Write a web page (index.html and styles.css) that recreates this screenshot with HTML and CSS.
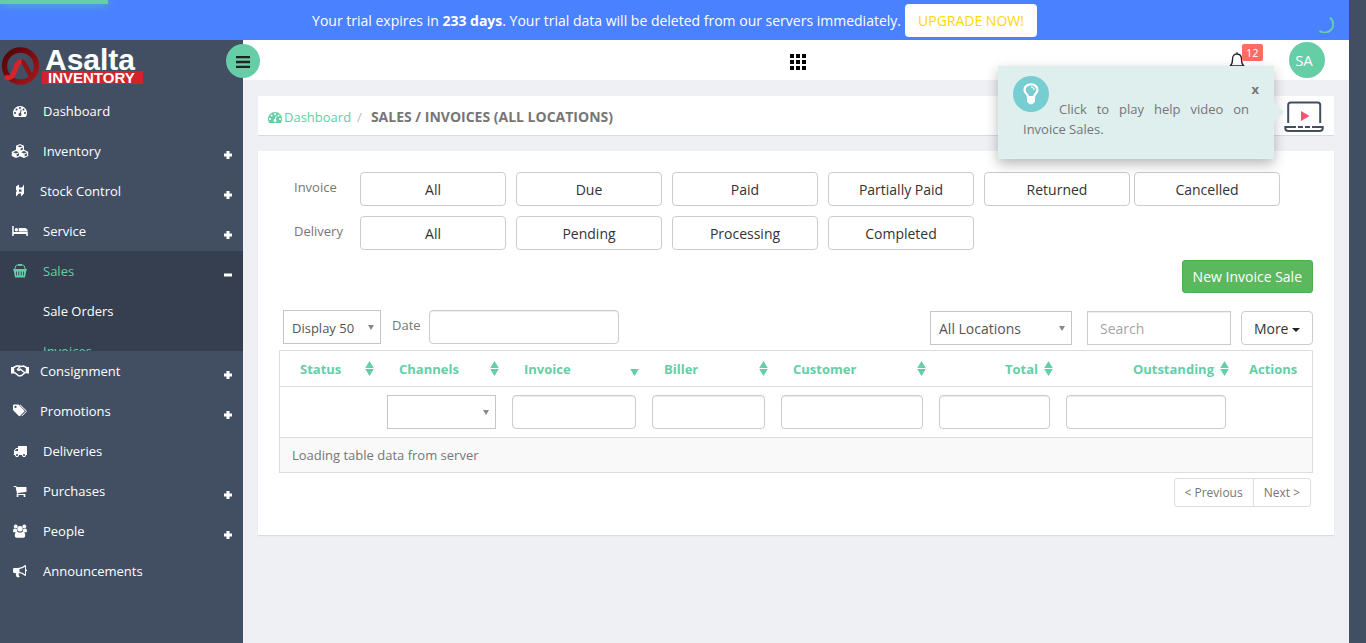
FILE: index.html
```html
<!DOCTYPE html>
<html lang="en">
<head>
<meta charset="utf-8">
<meta name="viewport" content="width=device-width, initial-scale=1">
<title>Sales / Invoices - Asalta Inventory</title>
<link rel="stylesheet" href="styles.css">
</head>
<body>
<svg class="sprite" aria-hidden="true">
  <symbol id="gauge" viewBox="0 0 1792 1792"><path d="M384 1152q0-53-37.500-90.500t-90.500-37.500-90.500 37.500-37.500 90.500 37.500 90.500 90.500 37.500 90.500-37.500 37.500-90.500zm192-448q0-53-37.500-90.500t-90.500-37.500-90.500 37.500-37.500 90.500 37.500 90.500 90.500 37.500 90.500-37.500 37.500-90.500zm428 481l101-382q6-26-7.500-48.500t-38.500-29.500-48 6.500-30 39.500l-101 382q-60 5-107 43.500t-63 98.500q-20 77 20 146t117 89 146-20 89-117q16-60-6-117t-72-91zm660-33q0-53-37.500-90.500t-90.500-37.500-90.500 37.500-37.500 90.500 37.500 90.500 90.500 37.500 90.500-37.500 37.500-90.500zm-640-640q0-53-37.500-90.500t-90.500-37.500-90.500 37.500-37.500 90.500 37.500 90.500 90.500 37.500 90.500-37.500 37.500-90.500zm448 192q0-53-37.500-90.500t-90.500-37.500-90.500 37.500-37.500 90.500 37.500 90.500 90.500 37.500 90.500-37.500 37.500-90.500zm320 448q0 261-141 483-19 29-54 29h-1402q-35 0-54-29-141-221-141-483 0-182 71-348t191-286 286-191 348-71 348 71 286 191 191 286 71 348z"/></symbol>
  <symbol id="sort" viewBox="0 0 9 15"><path d="M4.500 0L8.800 7H.2zM.2 8h8.600L4.500 15z"/></symbol>
  <symbol id="sort-down" viewBox="0 0 9 15"><path d="M.2 8h8.600L4.500 15z"/></symbol>
</svg>

<div class="app">
  <div class="trial">
    <span class="notice">Your trial expires in <b>233 days</b>. Your trial data will be deleted from our servers immediately.</span>
    <a class="upgrade" href="#">UPGRADE NOW!</a>
    <div class="progress"></div>
    <svg class="spinner" width="18" height="18" viewBox="0 0 18 18"><path d="M14 2.500A8 8 0 0 1 3.500 15.800" fill="none" stroke="#65cea7" stroke-width="2"/></svg>
  </div>

  <div class="shell">
    <aside class="sidebar">
      <a class="logo" href="#" aria-label="Asalta Inventory">
        <svg class="brand" width="146" height="42" viewBox="0 0 146 42">
          <defs>
            <linearGradient id="ring" x1="0" y1="0" x2="1" y2="1"><stop offset="0" stop-color="#4d0507"/><stop offset=".5" stop-color="#7a0c0f"/><stop offset="1" stop-color="#a5191d"/></linearGradient>
          </defs>
          <circle cx="20.500" cy="21" r="16" fill="none" stroke="url(#ring)" stroke-width="5.400"/>
          <path d="M20.500 16.500Q23 16 25 20l7 13" fill="none" stroke="#8d1518" stroke-width="4.500"/>
          <path d="M5 32c8 3 9-4 11-10 1.500-4 3-5.500 5.500-5.500" fill="none" stroke="#d8232a" stroke-width="5"/>
          <rect x="42" y="26" width="101" height="13" fill="#d2232a"/>
          <text class="logo-name" x="45" y="25">Asalta</text>
          <text class="logo-sub" x="48" y="38">INVENTORY</text>
        </svg>
      </a>
      <button class="toggle" aria-label="Toggle menu"><svg width="14" height="12" viewBox="0 0 14 12"><path d="M0 1h14M0 6h14M0 11h14" stroke="#222" stroke-width="2.400"/></svg></button>

      <nav>
        <a class="item" href="#"><svg class="ico"><use href="#gauge"/></svg>Dashboard</a>
        <a class="item more" href="#"><svg class="ico wide" viewBox="0 0 17 14"><path fill-rule="evenodd" d="M8.500 0l4 1.700v4.100l4.200 1.900v4.300l-4.200 2-4-1.800-4 1.800-4.200-2V7.700l4.200-1.900V1.700zM6 2.300l2.500 1 2.500-1L8.500 1.300zM9.200 6.600l2.200-1V3.500l-2.200.9zM1.700 8.300l2.800 1.200 2.800-1.200-2.800-1.200zM5.200 12.600l2.300-1.100V9.300l-2.300 1zM9.700 8.300l2.800 1.200 2.800-1.200-2.800-1.200zM13.200 12.600l2.300-1.100V9.300l-2.300 1z"/></svg>Inventory</a>
        <a class="item near more" href="#"><svg class="ico" viewBox="0 0 14 14"><path fill-rule="evenodd" d="M3 2.500l3-2v3h3l2-3v9l-3 3v-3H6l-3 3V8l1-1-1-1zM6 5.500v2.300h2.500V5.500z"/></svg>Stock Control</a>
        <a class="item more" href="#"><svg class="ico wide" viewBox="0 0 17 14"><path d="M.7 2H2.200V8h14.100v4h-1.500v-2H2.200v2H.7zM16.300 7.500H7.200V4h5.600q3.500 0 3.500 3.500zM6.600 5.700a1.700 1.700 0 1 1-3.400 0 1.700 1.700 0 0 1 3.400 0z"/></svg>Service</a>
        <div class="group">
          <a class="item active less" href="#"><svg class="ico" viewBox="0 0 14 14"><path d="M1.800 5l1-3Q3.200 1 4.300 1h5.400q1.100 0 1.500 1l1 3" fill="none" stroke="currentColor"/><path d="M5 0h4v1.800H5z"/><path fill-rule="evenodd" d="M.3 5h13.400v1.800h-.5L12 13.500H2L.8 6.800H.3zM3 7.500v4h.8v-4zm2.400 0v4h.8v-4zm2.400 0v4h.8v-4zm2.400 0v4h.8v-4z"/></svg>Sales</a>
          <a class="item sub" href="#">Sale Orders</a>
          <a class="item sub active" href="#">Invoices</a>
        </div>
        <a class="item near more" href="#"><svg class="ico wide" viewBox="0 0 18 14"><path d="M0 3h2v6.500H0zM16 3h2v6.500h-2z"/><path d="M2.500 3.500l3-1.500h3L10 2.500 12.500 2l3 1.500v5h-1.300L10.500 11.500 8 12 3.800 8.700H2.500zM8.700 3L6.500 5.500q1.500 1.500 3-.3l4 3.300" fill="none" stroke="currentColor" stroke-width="1.500"/></svg>Consignment</a>
        <a class="item near more" href="#"><svg class="ico" viewBox="0 0 14 14"><path fill-rule="evenodd" d="M0 1.500Q0 .5 1 .5h4.500l5.700 5.700q.8.800 0 1.600l-4 4q-.8.700-1.600 0L0 6zM2.500 1.800a1.100 1.100 0 1 0 0 2.200 1.100 1.100 0 0 0 0-2.200z"/><path d="M7 .8l6 5.800q.5.600 0 1.200L8.800 12" fill="none" stroke="currentColor"/></svg>Promotions</a>
        <a class="item" href="#"><svg class="ico" viewBox="0 0 1792 1792"><path d="M640 1408q0-52-38-90t-90-38-90 38-38 90 38 90 90 38 90-38 38-90zm-384-512h384v-256h-158q-13 0-22 9l-195 195q-9 9-9 22v30zm1280 512q0-52-38-90t-90-38-90 38-38 90 38 90 90 38 90-38 38-90zm256-1088v1024q0 15-4 26.500t-13.500 18.500-16.500 11.500-23.500 6-22.500 2-25.500 0-22.500-.5q0 106-75 181t-181 75-181-75-75-181h-384q0 106-75 181t-181 75-181-75-75-181h-64q-3 0-22.500.5t-25.500 0-22.500-2-23.500-6-16.500-11.500-13.500-18.500-4-26.500q0-26 19-45t45-19v-320q0-8-.5-35t0-38 2.500-34.500 6.500-37 14-30.500 22.500-30l198-198q19-19 50.500-32t58.500-13h160v-192q0-26 19-45t45-19h1024q26 0 45 19t19 45z"/></svg>Deliveries</a>
        <a class="item more" href="#"><svg class="ico" viewBox="0 0 1792 1792"><path d="M704 1536q0 52-38 90t-90 38-90-38-38-90 38-90 90-38 90 38 38 90zm896 0q0 52-38 90t-90 38-90-38-38-90 38-90 90-38 90 38 38 90zm128-1088v512q0 24-16.500 42.500t-40.500 21.500l-1044 122q13 60 13 70 0 16-24 64h920q26 0 45 19t19 45-19 45-45 19h-1024q-26 0-45-19t-19-45q0-11 8-31.500t16-36 21.500-40 15.500-29.500l-177-823h-204q-26 0-45-19t-19-45 19-45 45-19h256q16 0 28.500 6.500t19.500 15.500 13 24.500 8 26 5.500 29.500 4.500 26h1201q26 0 45 19t19 45z"/></svg>Purchases</a>
        <a class="item more" href="#"><svg class="ico" viewBox="0 0 14 14"><circle cx="2.700" cy="2.500" r="1.900"/><circle cx="11.300" cy="2.500" r="1.900"/><circle cx="7" cy="4.700" r="2.700"/><path d="M0 7.500Q0 4.500 1.200 4.500q1.300.8 2.500.3 0 1.700.9 2.700-1.200 0-1.900.8H1Q0 8.300 0 7.500zM14 7.500q0-3-1.200-3-1.300.8-2.500.3 0 1.700-.9 2.700 1.200 0 1.900.8H13q1 0 1-.8zM4.200 7.700q2.800 1.700 5.600 0 2.400 0 2.400 4 0 2-1.900 2H3.700q-1.900 0-1.900-2 0-4 2.400-4z"/></svg>People</a>
        <a class="item" href="#"><svg class="ico" viewBox="0 0 14 14"><path fill-rule="evenodd" d="M13 5.200q1 .3 1 1.100t-1 1.100v3.600q0 .9-.9.900Q9.500 9.500 6 9q-1 .8-.2 1.600-.5.700.9 1.900-.8 1.300-3 .6Q2.500 10.800 2.800 9H1.300Q0 9 0 7.700V5.300Q0 4 1.300 4H5q3.800 0 7.100-3 .9 0 .9.900zm-1-2.500Q9.500 4.600 6.500 5v3q3 .4 5.500 2.300z"/></svg>Announcements</a>
      </nav>
    </aside>

    <main class="main">
      <header class="topbar">
        <span></span>
        <button class="plain" aria-label="Apps"><svg width="16" height="16" viewBox="0 0 16 16"><path d="M0 0h4v4H0zm6 0h4v4H6zm6 0h4v4h-4zM0 6h4v4H0zm6 0h4v4H6zm6 0h4v4h-4zM0 12h4v4H0zm6 0h4v4H6zm6 0h4v4h-4z"/></svg></button>
        <div class="account">
          <button class="plain bell" aria-label="Notifications"><svg width="16" height="18" viewBox="0 0 16 18"><path d="M8 .3v1.500M1.200 14Q3.500 12 3.500 7.500 3.500 2 8 2t4.500 5.500Q12.500 12 14.800 14zM6.300 14.500q.2 2 1.700 2t1.700-2" fill="none" stroke="#222" stroke-width="1.300"/></svg><span class="badge">12</span></button>
          <button class="avatar">SA</button>
        </div>
      </header>

      <div class="content">
        <div class="crumbs">
          <a class="home" href="#"><svg width="14" height="14"><use href="#gauge"/></svg>Dashboard</a>
          <span class="slash">/</span>
          <h1>SALES / INVOICES (ALL LOCATIONS)</h1>
          <a class="video" href="#" aria-label="Play help video"><svg width="40" height="32" viewBox="0 0 40 32"><path d="M4.200 22V4q0-2.500 2.500-2.500h27Q36.200 1.500 36.200 4v18" fill="none" stroke="#424f63" stroke-width="2"/><path d="M12 26H1.300v1.200q0 2.800 3 2.800h31.400q3 0 3-2.800V26H28M14 26h5M21 26h5" fill="none" stroke="#424f63" stroke-width="2"/><path d="M17 10l8.500 5-8.500 5z" fill="#fc5171"/></svg></a>
          <div class="tip">
            <span class="bulb"><svg width="16" height="22" viewBox="0 0 16 22"><path d="M5 14Q4.700 12 3 10.200 1.500 8.500 1.500 6.800 2 1.300 8 1.300t6.500 5.500q0 1.700-1.500 3.400Q11.300 12 11 14z" fill="none" stroke="#fff" stroke-width="2.200"/><path d="M8 4q3 .2 3.200 3" fill="none" stroke="#fff" stroke-width="1.200"/><path d="M4 14h8v4.500l-2.500 2.800h-3L4 18.500z" fill="#fff"/></svg></span>
            <button class="plain close" aria-label="Close">x</button>
            <p>Click to play help video on Invoice Sales.</p>
          </div>
        </div>

        <section class="panel">
          <div class="filters">
            <div class="filter"><span class="label">Invoice</span>
              <div class="set"><button class="btn">All</button><button class="btn">Due</button><button class="btn">Paid</button><button class="btn">Partially Paid</button><button class="btn">Returned</button></div>
              <button class="btn">Cancelled</button></div>
            <div class="filter"><span class="label">Delivery</span>
              <div class="set"><button class="btn">All</button><button class="btn">Pending</button><button class="btn">Processing</button><button class="btn">Completed</button></div></div>
          </div>
          <div class="actions"><button class="new">New Invoice Sale</button></div>
          <div class="tools">
            <span class="pick display"><select aria-label="Rows"><option>Display 50</option></select></span>
            <label class="date" for="date">Date</label><input class="field" id="date" type="text">
            <div class="right">
              <span class="pick place"><select aria-label="Location"><option>All Locations</option></select></span>
              <input class="field search" type="text" placeholder="Search" aria-label="Search">
              <button class="btn drop">More <i class="caret"></i></button>
            </div>
          </div>
          <table class="grid">
            <colgroup><col class="c1"><col class="c2"><col class="c3"><col class="c4"><col class="c5"><col class="c6"><col class="c7"><col class="c8"></colgroup>
            <thead>
              <tr>
                <th><button class="sort">Status<svg><use href="#sort"/></svg></button></th>
                <th><button class="sort">Channels<svg><use href="#sort"/></svg></button></th>
                <th><button class="sort">Invoice<svg><use href="#sort-down"/></svg></button></th>
                <th><button class="sort">Biller<svg><use href="#sort"/></svg></button></th>
                <th><button class="sort">Customer<svg><use href="#sort"/></svg></button></th>
                <th><button class="sort end">Total<svg><use href="#sort"/></svg></button></th>
                <th><button class="sort end">Outstanding<svg><use href="#sort"/></svg></button></th>
                <th>Actions</th>
              </tr>
            </thead>
            <tbody>
              <tr class="inputs">
                <td></td>
                <td><span class="pick"><select aria-label="Channels"><option></option></select></span></td>
                <td><input class="field" type="text" aria-label="Invoice"></td>
                <td><input class="field" type="text" aria-label="Biller"></td>
                <td><input class="field" type="text" aria-label="Customer"></td>
                <td><input class="field" type="text" aria-label="Total"></td>
                <td><input class="field" type="text" aria-label="Outstanding"></td>
                <td></td>
              </tr>
              <tr class="loading"><td colspan="8">Loading table data from server</td></tr>
            </tbody>
          </table>
          <div class="pager"><button>&lt; Previous</button><button>Next &gt;</button></div>
        </section>
      </div>
    </main>
  </div>
</div>
</body>
</html>
```

FILE: styles.css
```css
* { box-sizing: border-box; }
body {
  margin: 0;
  background: #424f63;
  color: #767676;
  font: 13px/20px "Open Sans", sans-serif;
}
a { color: inherit; text-decoration: none; }
button, input, select { font: inherit; color: inherit; margin: 0; }
button { cursor: pointer; }
svg { display: block; fill: currentColor; flex: none; }
.sprite { position: absolute; width: 0; height: 0; }
.plain { border: 0; padding: 0; background: none; }

.app { display: flex; flex-direction: column; min-height: 100vh; margin-right: 17px; }

/* Trial banner */
.trial {
  position: relative;
  display: flex; align-items: center; justify-content: center; gap: 4px;
  height: 40px;
  background: #4a81ff;
  color: #fff;
  font-size: 14px;
}
.notice { padding-top: 2px; }
.upgrade { padding: 7px 13px 6px; border-radius: 4px; background: #fff; color: #ffd800; }
.progress { position: absolute; left: 0; top: 0; width: 8%; height: 4px; background: #65cea7; box-shadow: 0 0 8px #65cea7; }
.spinner { position: absolute; right: 15px; top: 15px; }

/* Sidebar */
.shell { display: flex; flex: 1; }
.sidebar { position: relative; flex: none; width: 243px; color: #fff; }
.logo { display: block; height: 51px; padding-top: 5px; }
.brand { overflow: visible; }
.logo-name { font: bold 30px "Liberation Sans", sans-serif; fill: #fff; }
.logo-sub { font: bold 15px "Liberation Sans", sans-serif; fill: #fff; }
.toggle {
  position: absolute; right: -17px; top: 4px; z-index: 2;
  display: grid; place-items: center;
  width: 34px; height: 34px; padding: 2px 0 0;
  border: 0; border-radius: 50%; background: #65cea7;
}
.item { display: flex; align-items: center; height: 40px; padding: 0 11px 0 13px; }
.ico { width: 14px; height: 14px; margin-right: 16px; }
.ico.wide { width: 18px; margin: 0 14px 0 -2px; }
.near .ico { margin-right: 13px; }
.near .ico.wide { margin-right: 11px; }
.more::after, .less::after {
  content: "";
  width: 8px; height: 8px; margin: 8px 0 0 auto;
  background: #fff;
}
.more::after { clip-path: polygon(31% 0, 69% 0, 69% 31%, 100% 31%, 100% 69%, 69% 69%, 69% 100%, 31% 100%, 31% 69%, 0 69%, 0 31%, 31% 31%); }
.less::after { clip-path: polygon(0 31%, 100% 31%, 100% 69%, 0 69%); }
.group { height: 100px; overflow: hidden; background: #353f4f; }
.sub { padding-left: 43px; }
.active { color: #65cea7; }

/* Top bar */
.main { flex: 1; min-width: 0; background: #eff0f4; }
.topbar {
  display: grid; grid-template-columns: 1fr auto 1fr; align-items: center;
  height: 40px; padding: 0 24px 0 27px;
  background: #fff; color: #000;
}
.topbar > .plain { padding-top: 4px; }
.account { display: flex; align-items: center; justify-content: flex-end; gap: 44px; }
.bell { position: relative; padding-top: 2px; }
.badge {
  position: absolute; left: 13px; top: -6px;
  padding: 0 4px; border-radius: 2px;
  background: #ff6c60; color: #fff; font-size: 11px; line-height: 17px;
}
.avatar {
  width: 36px; height: 36px; padding: 0 6px 0 0;
  border: 0; border-radius: 50%; background: #65cea7; color: #fff; font-size: 15px;
}

/* Breadcrumb */
.content { padding: 16px 15px; }
.crumbs {
  position: relative;
  display: flex; align-items: center;
  height: 40px; margin-bottom: 15px; padding: 2px 10px 0;
  background: #fff; border-bottom: 1px solid #d9dbde;
}
.home { display: flex; align-items: center; gap: 2px; color: #65cea7; }
.slash { margin: 0 9px 0 6px; color: #bbb; }
h1 { margin: 0; font-size: 14px; line-height: 20px; font-weight: 700; }
.video { margin-left: auto; }
.tip {
  position: absolute; right: 60px; top: -30px; z-index: 3;
  display: flow-root;
  width: 276px; padding: 33px 25px 20px;
  background: #deefee; box-shadow: 0 5px 12px rgba(0, 0, 0, .28);
}
.tip::after {
  content: "";
  position: absolute; left: 100%; top: 36px;
  border: 10px solid transparent; border-right: 0; border-left-color: #deefee;
}
.tip p { margin: 0; text-align: justify; text-indent: 36px; }
.bulb {
  position: absolute; left: 15px; top: 10px;
  display: grid; place-items: center;
  width: 36px; height: 36px; border-radius: 50%; background: #76cdd2;
}
.close { position: absolute; right: 15px; top: 13px; font-weight: 700; }

/* Panel */
.panel { padding: 21px 21px 28px; background: #fff; box-shadow: 0 1px 1px rgba(0, 0, 0, .08); }
.filters { display: grid; gap: 10px; padding-left: 15px; }
.filter, .set { display: flex; }
.filter { gap: 4px; }
.set { gap: 10px; }
.label { width: 62px; padding-top: 5px; }
.btn {
  width: 146px; height: 34px; padding: 2px 0 0;
  border: 1px solid #ccc; border-radius: 4px; background: #fff;
  color: #333; font-size: 14px; line-height: 20px;
}
.actions { display: flex; justify-content: flex-end; padding: 10px 0 17px; }
.new {
  height: 33px; padding: 0 10px;
  border: 1px solid #4cae4c; border-radius: 3px; background: #5cb85c;
  color: #fff; font-size: 14px;
}
.tools { display: flex; padding: 0 0 6px 4px; }
.right { display: flex; margin: 1px 0 -1px auto; }
.pick { position: relative; display: block; }
.pick::after {
  content: "";
  position: absolute; right: 7px; top: 15px;
  border: 3px solid transparent; border-top: 5px solid #888; border-bottom: 0;
  pointer-events: none;
}
.pick select {
  display: block; appearance: none;
  width: 100%; height: 34px; padding: 2px 8px 0;
  border: 1px solid #c6c6c6; border-radius: 0; background: #fff; color: #555;
}
.display { width: 98px; }
.place { width: 142px; font-size: 14px; }
.date { padding: 5px 8px 0 11px; }
.field {
  display: block; min-width: 0;
  width: 190px; height: 34px; padding: 0 12px;
  border: 1px solid #ccc; border-radius: 4px; background: #fff;
  box-shadow: inset 0 1px 1px rgba(0, 0, 0, .075);
}
.search { width: 144px; margin: 0 10px 0 15px; border-radius: 0; font-size: 14px; }
.search::placeholder { color: #a5a5a5; opacity: 1; }
.drop { width: 72px; }
.caret { display: inline-block; border: 4px solid transparent; border-top-color: #222; border-bottom: 0; vertical-align: middle; }

/* Table */
.grid {
  width: 100%; table-layout: fixed;
  border: 1px solid #ddd; border-collapse: separate; border-spacing: 0;
}
.c1 { width: 99px; }
.c2 { width: 125px; }
.c3 { width: 140px; }
.c4 { width: 129px; }
.c5 { width: 158px; }
.c6 { width: 127px; }
.c7 { width: 176px; }
.c8 { width: 78px; }
.grid th, .grid td { padding: 0 8px; border-bottom: 1px solid #ddd; text-align: left; }
.grid th { height: 36px; padding: 0; color: #65cea7; }
.grid th:last-child { padding-left: 15px; }
.sort {
  display: flex; align-items: center; justify-content: space-between; gap: 6px;
  width: 100%; padding: 0 5px 0 20px;
  border: 0; background: none; font-weight: 700;
}
.sort svg { width: 9px; height: 15px; }
.sort.end { justify-content: flex-end; }
.inputs td { height: 51px; }
.inputs .field { width: 100%; }
.grid .loading td { height: 34px; padding: 0 12px; border: 0; background: #f9f9f9; }

.pager { display: flex; justify-content: flex-end; padding: 5px 2px 0 0; }
.pager button {
  height: 29px; padding: 0 10px;
  border: 1px solid #ddd; border-radius: 3px 0 0 3px; background: #fff;
  font-size: 12px;
}
.pager button + button { margin-left: -1px; border-radius: 0 3px 3px 0; }
```
